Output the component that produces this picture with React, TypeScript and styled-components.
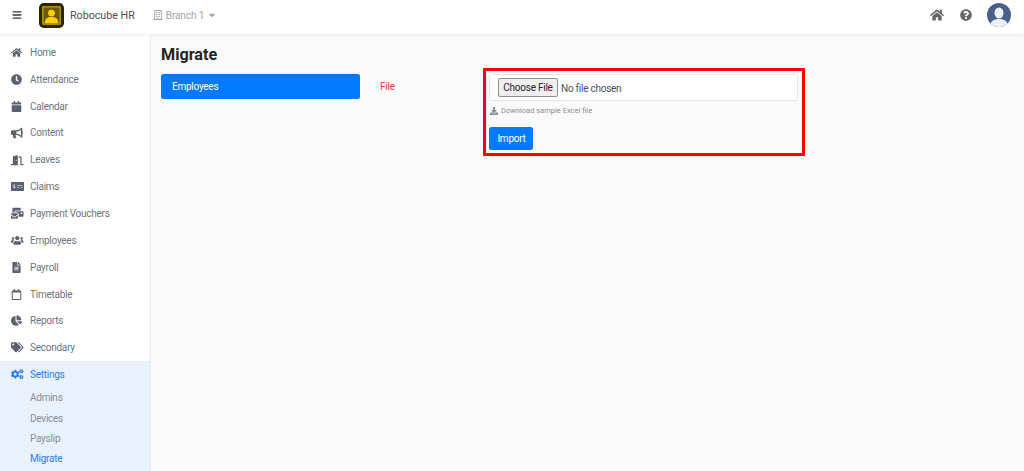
import type { ComponentType } from "react";
import styled, { createGlobalStyle } from "styled-components";
import {
  FaBars,
  FaBullhorn,
  FaCalendar,
  FaCaretDown,
  FaChartPie,
  FaClock,
  FaCogs,
  FaDoorOpen,
  FaDownload,
  FaFileAlt,
  FaHome,
  FaMailBulk,
  FaMoneyCheckAlt,
  FaQuestionCircle,
  FaRegBuilding,
  FaRegCalendar,
  FaTags,
  FaUsers,
} from "react-icons/fa";

const navItems: { label: string; icon: ComponentType<{ size?: number }>; size: number }[] = [
  { label: "Home", icon: FaHome, size: 11 },
  { label: "Attendance", icon: FaClock, size: 11 },
  { label: "Calendar", icon: FaCalendar, size: 11 },
  { label: "Content", icon: FaBullhorn, size: 12 },
  { label: "Leaves", icon: FaDoorOpen, size: 12.5 },
  { label: "Claims", icon: FaMoneyCheckAlt, size: 13 },
  { label: "Payment Vouchers", icon: FaMailBulk, size: 12.5 },
  { label: "Employees", icon: FaUsers, size: 12.5 },
  { label: "Payroll", icon: FaFileAlt, size: 11 },
  { label: "Timetable", icon: FaRegCalendar, size: 11 },
  { label: "Reports", icon: FaChartPie, size: 11 },
  { label: "Secondary", icon: FaTags, size: 12.5 },
];

const subItems = ["Admins", "Devices", "Payslip", "Migrate"];

export default function App() {
  return (
    <Page>
      <GlobalStyle />
      <TopBar>
        <MenuBtn>
          <FaBars size={10} />
        </MenuBtn>
        <Logo>
          <svg width="25" height="25" viewBox="0 0 26 26">
            <rect width="26" height="26" rx="5" fill="#2b2500" />
            <rect x="4" y="4" width="18" height="18" fill="#6b5a00" stroke="#e8c400" strokeWidth="1" />
            <circle cx="13" cy="10.5" r="3.6" fill="#ffd000" />
            <path d="M6 21c0-5 3-6.5 7-6.5s7 1.5 7 6.5z" fill="#ffd000" />
          </svg>
        </Logo>
        <Brand>Robocube HR</Brand>
        <Branch>
          <FaRegBuilding size={10} />
          <BranchName>Branch 1</BranchName>
          <FaCaretDown size={10} />
        </Branch>
        <TopActions>
          <TopIcon>
            <FaHome size={14} />
          </TopIcon>
          <TopIcon>
            <FaQuestionCircle size={12} />
          </TopIcon>
          <Avatar>
            <svg width="24" height="24" viewBox="0 0 24 24">
              <circle cx="12" cy="12" r="12" fill="#4a5f8c" />
              <ellipse cx="12" cy="10" rx="4.5" ry="5.5" fill="#eef1f4" />
              <path d="M3.5 20.5c1.5-3.5 5-4.5 8.500-4.500s7 1 8.500 4.500a12 12 0 0 1-17 0z" fill="#eef1f4" />
            </svg>
          </Avatar>
        </TopActions>
      </TopBar>
      <Body>
        <Sidebar>
          {navItems.map(({ label, icon: Icon, size }) => (
            <NavItem key={label}>
              <NavIcon>
                <Icon size={size} />
              </NavIcon>
              {label}
            </NavItem>
          ))}
          <OpenGroup>
            <NavItem $active>
              <NavIcon $active>
                <FaCogs size={12.5} />
              </NavIcon>
              Settings
            </NavItem>
            <SubList>
              {subItems.map((s) => (
                <SubItem key={s} $active={s === "Migrate"}>
                  {s}
                </SubItem>
              ))}
            </SubList>
          </OpenGroup>
        </Sidebar>
        <Main>
          <Title>Migrate</Title>
          <Columns>
            <TabColumn>
              <Tab>Employees</Tab>
            </TabColumn>
            <FileLabel>File</FileLabel>
            <ImportBox>
              <FileField>
                <ChooseBtn>Choose File</ChooseBtn>
                <NoFile>No file chosen</NoFile>
              </FileField>
              <SampleLink>
                <FaDownload size={8} />
                Download sample Excel file
              </SampleLink>
              <ImportBtn>Import</ImportBtn>
            </ImportBox>
          </Columns>
        </Main>
      </Body>
    </Page>
  );
}

/* ─── Styled Components ─────────────────────────── */

const GlobalStyle = createGlobalStyle`
  html, body {
    margin: 0;
    padding: 0;
    background: #fafafa;
  }
  * {
    box-sizing: border-box;
  }
`;

const Page = styled.div`
  width: 1024px;
  height: 471px;
  overflow: hidden;
  display: flex;
  flex-direction: column;
  font-family: Roboto, "Liberation Sans", sans-serif;
`;

const TopBar = styled.header`
  position: relative;
  z-index: 1;
  flex: 0 0 34px;
  display: flex;
  align-items: center;
  background: #fff;
  box-shadow: 0 1px 4px rgba(0, 0, 0, 0.08);
  padding: 0 13px 4px 12px;
`;

const MenuBtn = styled.div`
  width: 10px;
  display: flex;
  color: #343a40;
`;

const Logo = styled.div`
  display: flex;
  margin-left: 17px;
`;

const Brand = styled.span`
  margin-left: 6px;
  font-size: 10.7px;
  color: #4b4f54;
`;

const Branch = styled.div`
  display: flex;
  align-items: center;
  margin-left: 18px;
  font-size: 10px;
  letter-spacing: -0.1px;
  color: #a0a3a7;
`;

const BranchName = styled.span`
  margin: 0 3px;
`;

const TopActions = styled.div`
  margin-left: auto;
  display: flex;
  align-items: center;
  gap: 16px;
`;

const TopIcon = styled.span`
  display: flex;
  color: #666;
`;

const Avatar = styled.span`
  display: flex;
  margin-left: -1px;
`;

const Body = styled.div`
  flex: 1;
  display: flex;
  min-height: 0;
`;

const Sidebar = styled.nav`
  flex: 0 0 151px;
  background: #fff;
  border-right: 1px solid #ececec;
  padding-top: 5px;
  display: flex;
  flex-direction: column;
`;

const NavItem = styled.div<{ $active?: boolean }>`
  height: 26.85px;
  flex-shrink: 0;
  display: flex;
  align-items: center;
  padding-left: 11px;
  font-size: 10px;
  letter-spacing: -0.25px;
  color: ${({ $active }) => ($active ? "#2f7bf5" : "#6c757d")};
`;

const NavIcon = styled.span<{ $active?: boolean }>`
  width: 19px;
  display: flex;
  color: ${({ $active }) => ($active ? "#2f7bf5" : "#5a6270")};
`;

const OpenGroup = styled.div`
  flex: 1;
  background: #e9f1fd;
`;

const SubList = styled.div`
  display: flex;
  flex-direction: column;
  padding: 0.5px 0 0 30px;
`;

const SubItem = styled.div<{ $active?: boolean }>`
  height: 20.2px;
  line-height: 20.2px;
  font-size: 10px;
  letter-spacing: -0.25px;
  color: ${({ $active }) => ($active ? "#2f7bf5" : "#8a8f94")};
`;

const Main = styled.main`
  flex: 1;
  background: #fafafa;
  padding: 10px 0 0 10px;
`;

const Title = styled.h1`
  margin: 0;
  font-size: 16.2px;
  line-height: 22px;
  font-weight: 700;
  color: #212529;
`;

const Columns = styled.div`
  display: flex;
  align-items: flex-start;
  margin-top: 2px;
`;

const TabColumn = styled.div`
  flex: 0 0 199px;
  padding-top: 6px;
`;

const Tab = styled.div`
  height: 25px;
  line-height: 26px;
  padding-left: 11px;
  background: #007bff;
  border-radius: 2.5px;
  font-size: 10px;
  letter-spacing: -0.25px;
  color: #fff;
`;

const FileLabel = styled.div`
  flex: 0 0 103px;
  margin: 13px 0 0 20px;
  font-size: 10px;
  letter-spacing: -0.25px;
  line-height: 12px;
  color: #e2403f;
`;

const ImportBox = styled.div`
  width: 322px;
  height: 88px;
  border: 3px solid #f00;
  padding: 3px 4px 0 3px;
  display: flex;
  flex-direction: column;
  align-items: flex-start;
`;

const FileField = styled.div`
  width: 100%;
  height: 27px;
  display: flex;
  align-items: center;
  padding-left: 8px;
  background: #fff;
  border: 1px solid #e4e6e9;
  border-radius: 2.5px;
`;

const ChooseBtn = styled.div`
  width: 60px;
  height: 19px;
  line-height: 18px;
  text-align: center;
  background: #efefef;
  border: 1px solid #8f8f8f;
  border-radius: 2px;
  font-size: 10px;
  letter-spacing: -0.25px;
  color: #212529;
`;

const NoFile = styled.span`
  margin: 1px 0 0 3px;
  font-size: 10px;
  letter-spacing: -0.25px;
  color: #495057;
`;

const SampleLink = styled.div`
  display: flex;
  align-items: center;
  gap: 3px;
  margin-top: 4px;
  padding-left: 1px;
  font-size: 7.5px;
  line-height: 12px;
  color: #868e96;
`;

const ImportBtn = styled.div`
  margin-top: 10px;
  width: 44px;
  height: 22.5px;
  line-height: 23.5px;
  padding-left: 1px;
  text-align: center;
  background: #007bff;
  border-radius: 2.5px;
  font-size: 10px;
  letter-spacing: -0.25px;
  color: #fff;
`;
